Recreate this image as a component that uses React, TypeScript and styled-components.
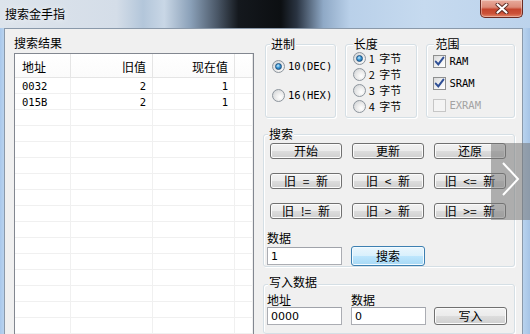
import React from "react"
import styled, { createGlobalStyle } from "styled-components"

const GlobalStyle = createGlobalStyle`
  html, body {
    margin: 0;
    padding: 0;
  }
  body {
    font-family: "Noto Sans CJK SC", "DejaVu Sans", sans-serif;
    font-size: 12px;
    color: #000;
    background: #b9d1ea;
  }
`

const Window = styled.div`
  position: relative;
  width: 530px;
  height: 334px;
  overflow: hidden;
  display: flex;
  flex-direction: column;
  background: linear-gradient(90deg, #a9c8ec 0, #b9d3ee 4px, #b9d3ee 523px, #a6c4e6 100%);
`

const TitleBar = styled.div`
  flex: none;
  height: 28px;
  display: flex;
  justify-content: space-between;
  align-items: flex-start;
  background: linear-gradient(
    90deg,
    #dde4ec 0%,
    #d4dde8 22%,
    #b3c6da 27%,
    #c9d7e6 31%,
    #8aa0b8 36%,
    #4a5767 41%,
    #14181d 45%,
    #0c0f12 53%,
    #2a3442 56%,
    #8fa9c6 61%,
    #b9d0e9 66%,
    #c6daef 80%,
    #bcd3ec 100%
  );
`

const Title = styled.span`
  margin: 6px 0 0 5px;
  font-size: 12px;
  line-height: 15px;
  text-shadow: 0 0 6px rgba(255, 255, 255, 0.9);
`

const CloseButton = styled.div`
  width: 43px;
  height: 18px;
  margin-right: 7px;
  box-sizing: border-box;
  border: 1px solid #6b2a22;
  border-top: none;
  border-radius: 0 0 5px 5px;
  background: linear-gradient(#e8ab9c 0%, #dc8b78 42%, #c5452d 55%, #cc5238 80%, #e3876a 100%);
  box-shadow: inset 0 0 0 1px rgba(255, 255, 255, 0.35);
  display: flex;
  align-items: center;
  justify-content: center;
`

const Client = styled.div`
  flex: 1;
  min-height: 0;
  margin: 0 7px 0 4px;
  border: 1px solid #8a99aa;
  border-bottom: none;
  background: #f0f0f0;
  display: flex;
  gap: 9px;
  padding: 7px 0 0 9px;
`

const LeftPanel = styled.div`
  width: 240px;
  display: flex;
  flex-direction: column;
`

const PanelLabel = styled.div`
  line-height: 14px;
  height: 14px;
`

const ListView = styled.div`
  margin-top: 3px;
  flex: 1;
  border: 1px solid #828790;
  border-bottom: none;
  background: #fff;
  display: grid;
  grid-template-columns: 56px 82px 82px 1fr;
  grid-template-rows: 24px;
  grid-auto-rows: 16px;
  align-content: start;
  overflow: hidden;
`

const HeaderCell = styled.div<{ $align?: "left" | "right" }>`
  height: 24px;
  box-sizing: border-box;
  border-right: 1px solid #e5e5e5;
  border-bottom: 1px solid #e5e5e5;
  background: linear-gradient(#ffffff, #fbfbfb);
  padding: 5px 6px 0 7px;
  line-height: 15px;
  text-align: ${(p) => p.$align || "left"};
`

const Cell = styled.div<{ $align?: "left" | "right" }>`
  height: 16px;
  box-sizing: border-box;
  border-right: 1px solid #f0f0f0;
  border-bottom: 1px solid #f0f0f0;
  padding: 1px 6px 0 7px;
  line-height: 14px;
  font-family: "DejaVu Sans Mono", monospace;
  font-size: 10.5px;
  text-align: ${(p) => p.$align || "left"};
`

const RightPanel = styled.div`
  width: 252px;
  display: flex;
  flex-direction: column;
`

const TopRow = styled.div`
  display: flex;
  gap: 9px;
  margin-top: 8px;
  padding-left: 2px;
`

const Group = styled.div<{ $width: number; $height?: number }>`
  position: relative;
  box-sizing: border-box;
  width: ${(p) => p.$width}px;
  ${(p) => (p.$height ? `height: ${p.$height}px;` : "")}
  border: 1px solid #d5dfe5;
  border-radius: 3px;
  box-shadow: inset 1px 1px 0 #fff, 1px 1px 0 #fff;
`

const GroupLabel = styled.span<{ $left?: number; $top?: number }>`
  position: absolute;
  top: ${(p) => p.$top ?? -8}px;
  left: ${(p) => p.$left ?? 4}px;
  padding: 0 1px;
  background: #f0f0f0;
  line-height: 14px;
`

const OptionList = styled.div<{ $top: number; $left: number; $gap: number }>`
  display: flex;
  flex-direction: column;
  gap: ${(p) => p.$gap}px;
  padding: ${(p) => p.$top}px 0 0 ${(p) => p.$left}px;
`

const OptionRow = styled.label`
  display: flex;
  align-items: center;
  gap: 3px;
  height: 14px;
  line-height: 14px;
  white-space: pre;
`

const RadioMark = styled.span<{ $checked?: boolean }>`
  position: relative;
  flex: none;
  width: 13px;
  height: 13px;
  box-sizing: border-box;
  border-radius: 50%;
  border: 1px solid #8d959d;
  background: radial-gradient(circle at 65% 65%, #ffffff 0%, #eaeaea 45%, #c9cdd1 100%);

  &::after {
    content: "";
    display: ${(p) => (p.$checked ? "block" : "none")};
    position: absolute;
    left: 2px;
    top: 2px;
    width: 7px;
    height: 7px;
    box-sizing: border-box;
    border-radius: 50%;
    border: 1px solid #1c4f7e;
    background: radial-gradient(circle at 40% 35%, #c8ecff 0%, #3a98d6 45%, #135896 100%);
  }
`

const CheckBox = styled.span<{ $disabled?: boolean }>`
  flex: none;
  width: 13px;
  height: 13px;
  box-sizing: border-box;
  border: 1px solid ${(p) => (p.$disabled ? "#c6c6c6" : "#8e8f8f")};
  background: ${(p) =>
    p.$disabled ? "#f4f4f4" : "linear-gradient(135deg, #d9dadb 0%, #f2f2f2 55%, #ffffff 100%)"};
  display: flex;
  align-items: center;
  justify-content: center;
`

const OptionText = styled.span<{ $disabled?: boolean; $mono?: boolean; $size?: number }>`
  color: ${(p) => (p.$disabled ? "#a3a3a3" : "#000")};
  font-family: ${(p) =>
    p.$mono ? `"DejaVu Sans Mono", "Noto Sans CJK SC", monospace` : "inherit"};
  font-size: ${(p) => (p.$mono ? "10.5px" : `${p.$size ?? 12}px`)};
  word-spacing: 2px;
`

const SearchGroup = styled(Group)`
  margin-top: 16px;
  padding-top: 8px;
`

const WriteGroup = styled(Group)`
  margin-top: 17px;
  padding-top: 8px;
  height: 60px;
`

const ButtonGrid = styled.div`
  display: grid;
  grid-template-columns: repeat(3, 72px);
  grid-auto-rows: 16px;
  column-gap: 10px;
  row-gap: 14px;
  padding-left: 6px;
`

const Button = styled.button<{ $primary?: boolean; $height?: number }>`
  box-sizing: border-box;
  height: ${(p) => p.$height ?? 16}px;
  margin: 0;
  padding: 0;
  font-family: inherit;
  font-size: 12px;
  line-height: 14px;
  color: #000;
  border: 1px solid ${(p) => (p.$primary ? "#3c7fb1" : "#707070")};
  border-radius: 3px;
  background: ${(p) =>
    p.$primary
      ? "linear-gradient(#eaf6fd 0%, #d9f0fc 50%, #bee6fd 50%, #a7d9f5 100%)"
      : "linear-gradient(#f2f2f2 0%, #ebebeb 50%, #dddddd 50%, #cfcfcf 100%)"};
  box-shadow: inset 0 0 0 1px ${(p) => (p.$primary ? "#f3fbff" : "#fbfbfb")};
  white-space: pre;
  word-spacing: 4px;
`

const FieldGrid = styled.div<{ $top?: number }>`
  display: grid;
  grid-template-columns: 75px 74px 73px;
  column-gap: 9px;
  align-items: center;
  padding-left: 3px;
  margin-top: ${(p) => p.$top ?? 0}px;
`

const FieldLabel = styled.div<{ $gap?: number }>`
  line-height: 14px;
  height: 14px;
  margin-bottom: ${(p) => p.$gap ?? 1}px;
`

const TextBox = styled.input`
  box-sizing: border-box;
  width: 75px;
  height: 18px;
  margin: 0;
  padding: 0 3px;
  border: 1px solid #abadb3;
  border-top-color: #a0a3aa;
  background: #fff;
  font-family: "DejaVu Sans", sans-serif;
  font-size: 11px;
  line-height: 16px;
  color: #000;
  outline: none;
`

const NextOverlay = styled.div`
  position: absolute;
  left: 491px;
  top: 143px;
  width: 39px;
  height: 77px;
  background: rgba(118, 118, 118, 0.55);
`

const rows = [
  { addr: "0032", old: "2", now: "1" },
  { addr: "015B", old: "2", now: "1" }
]

const searchButtons = ["开始", "更新", "还原", "旧 = 新", "旧 < 新", "旧 <= 新", "旧 != 新", "旧 > 新", "旧 >= 新"]

const Check = () => (
  <svg width="11" height="11" viewBox="0 0 11 11">
    <path d="M1.8 5.6 L4.3 8.4 L9.4 1.6" fill="none" stroke="#2f4f95" strokeWidth="2" strokeLinecap="round" />
  </svg>
)

const App = () => {
  const emptyRows = Array.from({ length: 14 })
  return (
    <Window>
      <GlobalStyle />
      <TitleBar>
        <Title>搜索金手指</Title>
        <CloseButton>
          <svg width="14" height="11" viewBox="0 0 14 11">
            <path d="M2.5 1.5 L11.5 9.5 M11.5 1.5 L2.5 9.5" stroke="#5a2a22" strokeWidth="4" strokeLinecap="round" />
            <path d="M2.5 1.5 L11.5 9.5 M11.5 1.5 L2.5 9.5" stroke="#ffffff" strokeWidth="2.2" strokeLinecap="round" />
          </svg>
        </CloseButton>
      </TitleBar>
      <Client>
        <LeftPanel>
          <PanelLabel>搜索结果</PanelLabel>
          <ListView>
            <HeaderCell>地址</HeaderCell>
            <HeaderCell $align="right">旧值</HeaderCell>
            <HeaderCell $align="right">现在值</HeaderCell>
            <HeaderCell />
            {rows.map((r) => (
              <React.Fragment key={r.addr}>
                <Cell>{r.addr}</Cell>
                <Cell $align="right">{r.old}</Cell>
                <Cell $align="right">{r.now}</Cell>
                <Cell />
              </React.Fragment>
            ))}
            {emptyRows.map((_, i) => (
              <React.Fragment key={i}>
                <Cell />
                <Cell />
                <Cell />
                <Cell />
              </React.Fragment>
            ))}
          </ListView>
        </LeftPanel>
        <RightPanel>
          <TopRow>
            <Group $width={71} $height={74}>
              <GroupLabel>进制</GroupLabel>
              <OptionList $top={14} $left={6} $gap={15}>
                <OptionRow>
                  <RadioMark $checked />
                  <OptionText $mono>10(DEC)</OptionText>
                </OptionRow>
                <OptionRow>
                  <RadioMark />
                  <OptionText $mono>16(HEX)</OptionText>
                </OptionRow>
              </OptionList>
            </Group>
            <Group $width={73} $height={74}>
              <GroupLabel $left={7}>长度</GroupLabel>
              <OptionList $top={6} $left={7} $gap={2}>
                {[1, 2, 3, 4].map((n) => (
                  <OptionRow key={n}>
                    <RadioMark $checked={n === 1} />
                    <OptionText $size={11}>{`${n} 字节`}</OptionText>
                  </OptionRow>
                ))}
              </OptionList>
            </Group>
            <Group $width={89} $height={74}>
              <GroupLabel $left={7}>范围</GroupLabel>
              <OptionList $top={9} $left={6} $gap={8}>
                <OptionRow>
                  <CheckBox>
                    <Check />
                  </CheckBox>
                  <OptionText $mono>RAM</OptionText>
                </OptionRow>
                <OptionRow>
                  <CheckBox>
                    <Check />
                  </CheckBox>
                  <OptionText $mono>SRAM</OptionText>
                </OptionRow>
                <OptionRow>
                  <CheckBox $disabled />
                  <OptionText $mono $disabled>
                    EXRAM
                  </OptionText>
                </OptionRow>
              </OptionList>
            </Group>
          </TopRow>
          <SearchGroup $width={252} $height={140}>
            <GroupLabel>搜索</GroupLabel>
            <ButtonGrid>
              {searchButtons.map((b) => (
                <Button key={b}>{b}</Button>
              ))}
            </ButtonGrid>
            <FieldGrid $top={12}>
              <FieldLabel>数据</FieldLabel>
              <div />
              <div />
              <TextBox defaultValue="1" />
              <Button $primary $height={20}>
                搜索
              </Button>
            </FieldGrid>
          </SearchGroup>
          <WriteGroup $width={252}>
            <GroupLabel $top={-10}>写入数据</GroupLabel>
            <FieldGrid>
              <FieldLabel $gap={0}>地址</FieldLabel>
              <FieldLabel $gap={0}>数据</FieldLabel>
              <div />
              <TextBox defaultValue="0000" />
              <TextBox defaultValue="0" />
              <Button $height={18}>写入</Button>
            </FieldGrid>
          </WriteGroup>
        </RightPanel>
      </Client>
      <NextOverlay>
        <svg width="39" height="77" viewBox="0 0 39 77">
          <path d="M12 20 L27 36 L12 52" fill="none" stroke="#ffffff" strokeWidth="2" />
        </svg>
      </NextOverlay>
    </Window>
  )
}

export default App
